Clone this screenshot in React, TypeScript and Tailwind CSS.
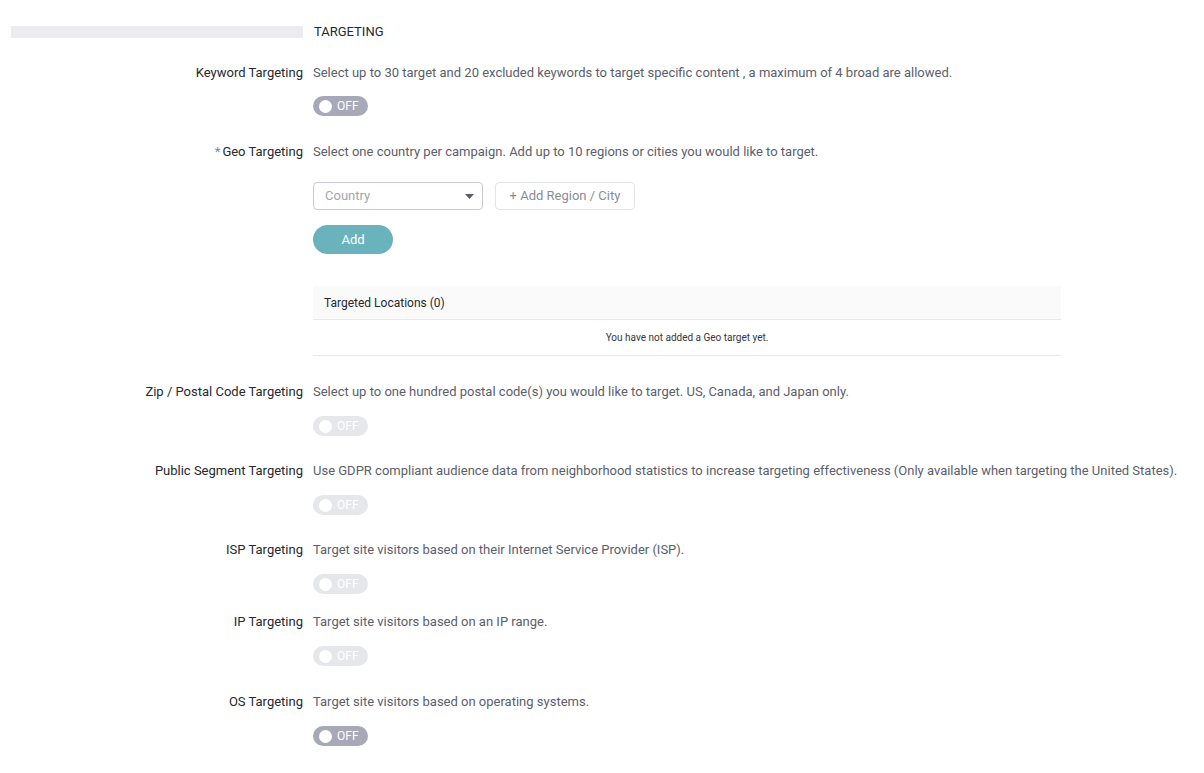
import React from "react";

function Toggle({ disabled = false }: { disabled?: boolean }) {
  return (
    <div
      className={`flex h-[20px] w-[55px] items-center gap-[5px] rounded-full pl-[6px] ${
        disabled ? "bg-[#e6e7eb]" : "bg-[#a7a9b8]"
      }`}
    >
      <span className="h-[13px] w-[13px] rounded-full bg-white" />
      <span className="text-[12px] leading-none text-white">OFF</span>
    </div>
  );
}

function Row({
  label,
  required = false,
  desc,
  children,
  className = "",
}: {
  label: string;
  required?: boolean;
  desc: string;
  children: React.ReactNode;
  className?: string;
}) {
  return (
    <div className={`flex ${className}`}>
      <div className="w-[303px] shrink-0 text-right text-[13px] leading-[20px] text-[#262830]">
        {required && <span className="mr-[2px] text-[#5b8fd0]">*</span>}
        {label}
      </div>
      <div className="flex-1 pl-[10px]">
        <div className="whitespace-nowrap text-[13px] leading-[20px] text-[#5b5e6b]">{desc}</div>
        {children}
      </div>
    </div>
  );
}

export default function App() {
  return (
    <div className="min-h-screen bg-white pt-[22px] font-['Roboto',sans-serif]">
      <div className="flex items-center">
        <div className="ml-[11px] h-[12px] w-[292px] bg-[#ececf0]" />
        <div className="pl-[11px] text-[13px] leading-[20px] text-[#262830]">TARGETING</div>
      </div>

      <Row label="Keyword Targeting" desc="Select up to 30 target and 20 excluded keywords to target specific content , a maximum of 4 broad are allowed." className="mt-[21px]">
        <div className="mt-[13px]">
          <Toggle />
        </div>
      </Row>

      <Row required label="Geo Targeting" desc="Select one country per campaign. Add up to 10 regions or cities you would like to target." className="mt-[26px]">
        <div className="mt-[20px] flex gap-[12px]">
          <div className="flex h-[28px] w-[170px] items-center justify-between rounded-[4px] border border-[#c9cad3] pl-[11px] pr-[8px]">
            <span className="text-[13px] text-[#a3a5b1]">Country</span>
            <svg width="9" height="5" viewBox="0 0 9 5">
              <path d="M0 0 L9 0 L4.5 5 Z" fill="#5b5e6b" />
            </svg>
          </div>
          <div className="flex h-[28px] w-[140px] items-center justify-center rounded-[4px] border border-[#e3e4e8] text-[13px] text-[#8a8c98]">
            + Add Region / City
          </div>
        </div>
        <button className="mt-[15px] flex h-[29px] w-[80px] items-center justify-center rounded-full bg-[#6ab3bd] text-[13px] text-white">
          Add
        </button>
        <div className="mt-[32px] w-[748px]">
          <div className="flex h-[34px] items-center border-b border-[#e8e8ec] bg-[#fafafa] pl-[11px] text-[12px] text-[#262830]">
            Targeted Locations (0)
          </div>
          <div className="flex h-[36px] items-center justify-center border-b border-[#e8e8ec] text-[10px] text-[#333640]">
            You have not added a Geo target yet.
          </div>
        </div>
      </Row>

      <Row label="Zip / Postal Code Targeting" desc="Select up to one hundred postal code(s) you would like to target. US, Canada, and Japan only." className="mt-[26px]">
        <div className="mt-[14px]">
          <Toggle disabled />
        </div>
      </Row>

      <Row label="Public Segment Targeting" desc="Use GDPR compliant audience data from neighborhood statistics to increase targeting effectiveness (Only available when targeting the United States)." className="mt-[25px]">
        <div className="mt-[14px]">
          <Toggle disabled />
        </div>
      </Row>

      <Row label="ISP Targeting" desc="Target site visitors based on their Internet Service Provider (ISP)." className="mt-[25px]">
        <div className="mt-[14px]">
          <Toggle disabled />
        </div>
      </Row>

      <Row label="IP Targeting" desc="Target site visitors based on an IP range." className="mt-[18px]">
        <div className="mt-[14px]">
          <Toggle disabled />
        </div>
      </Row>

      <Row label="OS Targeting" desc="Target site visitors based on operating systems." className="mt-[26px]">
        <div className="mt-[14px]">
          <Toggle />
        </div>
      </Row>
    </div>
  );
}
